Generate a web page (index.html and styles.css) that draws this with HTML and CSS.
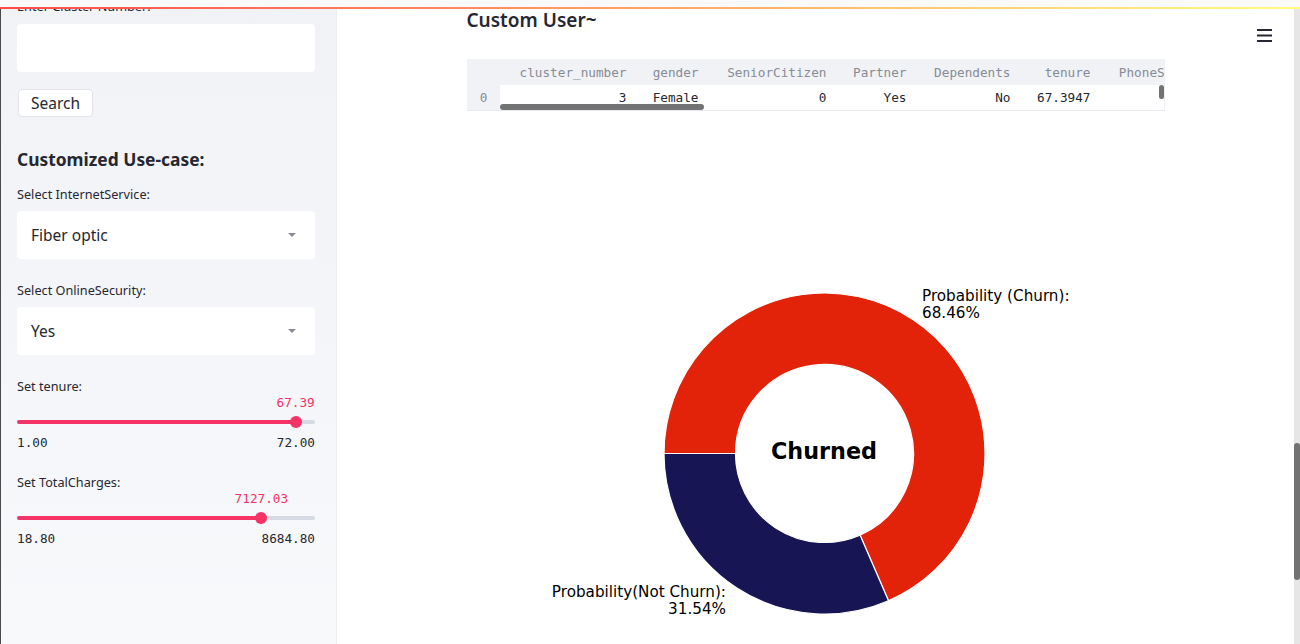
FILE: index.html
```html
<!DOCTYPE html>
<html lang="en">
<head>
<meta charset="utf-8">
<title>Churn</title>
<link rel="stylesheet" href="styles.css">
</head>
<body>
<div class="topbar"><div class="topbar-blank"></div><div class="deco"></div></div>
<div class="app">
  <aside class="sidebar">
    <div class="lbl lbl-cut">Enter Cluster Number:</div>
    <div class="textinput"></div>
    <button class="btn">Search</button>
    <h3 class="sb-title">Customized Use-case:</h3>

    <div class="field">
      <div class="lbl">Select InternetService:</div>
      <div class="select"><span>Fiber optic</span><i class="caret"></i></div>
    </div>
    <div class="field">
      <div class="lbl">Select OnlineSecurity:</div>
      <div class="select"><span>Yes</span><i class="caret"></i></div>
    </div>
    <div class="field">
      <div class="lbl">Set tenure:</div>
      <div class="slider">
        <div class="val-row"><span class="val" style="left:93.5%">67.39</span></div>
        <div class="track-row">
          <div class="track"><div class="fill" style="width:93.5%"></div></div>
          <div class="thumb" style="left:93.5%"></div>
        </div>
        <div class="minmax"><span>1.00</span><span>72.00</span></div>
      </div>
    </div>
    <div class="field">
      <div class="lbl">Set TotalCharges:</div>
      <div class="slider">
        <div class="val-row"><span class="val" style="left:82.0%">7127.03</span></div>
        <div class="track-row">
          <div class="track"><div class="fill" style="width:82.0%"></div></div>
          <div class="thumb" style="left:82.0%"></div>
        </div>
        <div class="minmax"><span>18.80</span><span>8684.80</span></div>
      </div>
    </div>
  </aside>

  <main class="main">
    <button class="menu" aria-label="menu">
      <svg width="15" height="14" viewBox="0 0 15 14"><rect x="0" y="0" width="15" height="2" fill="#262730"/><rect x="0" y="5.5" width="15" height="2" fill="#262730"/><rect x="0" y="11" width="15" height="2" fill="#262730"/></svg>
    </button>
    <div class="content">
      <h2 class="title">Custom User~</h2>
      <div class="df">
        <table>
          <colgroup>
            <col style="width:33px"><col style="width:141px"><col style="width:72px"><col style="width:128px"><col style="width:80px"><col style="width:104px"><col style="width:80px"><col style="width:120px"><col style="width:120px"><col style="width:120px">
          </colgroup>
          <thead>
            <tr><th class="idx"></th><th>cluster_number</th><th>gender</th><th>SeniorCitizen</th><th>Partner</th><th>Dependents</th><th>tenure</th><th>PhoneService</th><th>MultipleLines</th><th>InternetService</th></tr>
          </thead>
          <tbody>
            <tr><th class="idx">0</th><td>3</td><td>Female</td><td>0</td><td>Yes</td><td>No</td><td>67.3947</td><td>Yes</td><td>Yes</td><td>Fiber optic</td></tr>
          </tbody>
        </table>
        <div class="hthumb"></div>
        <div class="vthumb"></div>
      </div>
      <svg class="chart" width="698" height="520" viewBox="467 124 698 520">
        <path d="M 664 453.5 A 160.5 160.5 0 1 1 888.5 600.7 L 860 535.1 A 89 89 0 1 0 735.5 453.5 Z" fill="#e2230a" stroke="#ffffff" stroke-width="1.2"/>
        <path d="M 888.5 600.7 A 160.5 160.5 0 0 1 664 453.5 L 735.5 453.5 A 89 89 0 0 0 860 535.1 Z" fill="#171553" stroke="#ffffff" stroke-width="1.2"/>
        <text class="lab" x="922" y="301">Probability (Churn):</text>
        <text class="lab" x="922" y="318">68.46%</text>
        <text class="lab" x="726" y="597" text-anchor="end">Probability(Not Churn):</text>
        <text class="lab" x="726" y="614" text-anchor="end">31.54%</text>
        <text class="center" x="824" y="459" text-anchor="middle">Churned</text>
      </svg>
    </div>
  </main>

  <div class="vscroll"><div class="vscroll-thumb"></div></div>
</div>
</body>
</html>
```
FILE: styles.css
```css
* { box-sizing: border-box; margin: 0; padding: 0; }
html, body { width: 1300px; height: 644px; overflow: hidden; }
body {
  font-family: "Noto Sans", "Open Sans", sans-serif;
  color: #262730;
  background: #ffffff;
}

.topbar {
  position: fixed;
  top: 0; left: 0; right: 0;
  z-index: 10;
  display: flex;
  flex-direction: column;
}
.topbar-blank { height: 7px; background: #fafafa; }
.deco { height: 2px; background: linear-gradient(90deg, #ff4b4b, #fffd80); }

.app { display: flex; height: 644px; }

/* ---------- sidebar ---------- */
.sidebar {
  width: 337px;
  flex: none;
  background: linear-gradient(180deg, #f0f2f6 0%, #f8f9fb 100%);
  border-left: 1px solid #4a4a4a;
  border-right: 1px solid #eceef2;
  padding: 0 21px 0 16px;
  overflow: hidden;
  display: flex;
  flex-direction: column;
  align-items: stretch;
}
.lbl {
  font-size: 12.7px;
  line-height: 18px;
  height: 18px;
  color: #262730;
  white-space: nowrap;
}
.lbl-cut { margin-top: -3px; }
.textinput {
  margin-top: 9px;
  height: 48px;
  background: #ffffff;
  border-radius: 4px;
}
.btn {
  align-self: flex-start;
  margin-top: 17px;
  margin-left: 1px;
  height: 28px;
  padding: 0 12px;
  background: #ffffff;
  border: 1px solid #e2e4e9;
  border-radius: 4px;
  font-family: inherit;
  font-size: 15.5px;
  color: #262730;
  line-height: 26px;
}
.sb-title {
  margin-top: 30px;
  font-size: 17.4px;
  line-height: 24px;
  font-weight: 700;
  color: #262730;
  white-space: nowrap;
}
.field { margin-top: 22px; }
.sb-title + .field { margin-top: 14px; }
.select {
  margin-top: 8px;
  height: 48px;
  background: #ffffff;
  border-radius: 4px;
  display: flex;
  align-items: center;
  justify-content: space-between;
  padding: 0 19px 0 14px;
  font-size: 15.5px;
}
.caret {
  width: 0; height: 0;
  border-left: 4px solid transparent;
  border-right: 4px solid transparent;
  border-top: 4px solid #898c96;
}

.slider { display: flex; flex-direction: column; }
.val-row { position: relative; height: 16px; }
.val {
  position: absolute;
  top: 0;
  transform: translateX(-50%);
  font-family: "DejaVu Sans Mono", monospace;
  font-size: 12.7px;
  line-height: 16px;
  color: #f63366;
  white-space: nowrap;
}
.track-row {
  position: relative;
  height: 22px;
  display: flex;
  align-items: center;
}
.track {
  flex: 1;
  height: 4px;
  border-radius: 2px;
  background: #d5dae4;
  display: flex;
}
.fill { height: 4px; border-radius: 2px; background: #f63366; }
.thumb {
  position: absolute;
  top: 5px;
  width: 12px; height: 12px;
  margin-left: -6px;
  border-radius: 50%;
  background: #f63366;
}
.minmax {
  margin-top: 2px;
  display: flex;
  justify-content: space-between;
  font-family: "DejaVu Sans Mono", monospace;
  font-size: 12.7px;
  line-height: 16px;
  color: #262730;
}

/* ---------- main ---------- */
.main {
  position: relative;
  flex: 1;
  display: flex;
  justify-content: center;
  overflow: hidden;
  background: #ffffff;
}
.menu {
  position: absolute;
  top: 29px;
  right: 22px;
  border: 0;
  background: transparent;
  display: flex;
  width: 15px;
  height: 14px;
}
.content { width: 698px; flex: none; }
.title {
  margin-top: 7.5px;
  font-size: 19px;
  line-height: 24px;
  font-weight: 600;
  color: #262730;
}
.df {
  position: relative;
  margin-top: 27.5px;
  height: 52px;
  overflow: hidden;
  border-bottom: 1px solid #e6e9ef;
  border-right: 1px solid #eef0f3;
}
.df table {
  table-layout: fixed;
  border-collapse: collapse;
  width: 998px;
  font-family: "DejaVu Sans Mono", monospace;
  font-size: 12.7px;
}
.df th, .df td {
  text-align: right;
  padding: 0 14px 0 0;
  white-space: nowrap;
  font-weight: 400;
}
.df thead tr { height: 26px; background: #f0f2f6; }
.df thead th { color: #878b97; }
.df tbody tr { height: 25px; }
.df tbody td { color: #262730; background: #ffffff; }
.df th.idx { background: #f0f2f6; color: #878b97; padding-right: 12px; }
.hthumb {
  position: absolute;
  left: 33px;
  top: 45px;
  width: 204px;
  height: 6px;
  border-radius: 3px;
  background: #727272;
}
.vthumb {
  position: absolute;
  left: 692px;
  top: 26px;
  width: 5px;
  height: 14px;
  border-radius: 3px;
  background: #727272;
}
.chart { display: block; margin-top: 13px; overflow: visible; }
.chart .lab {
  font-family: "DejaVu Sans", sans-serif;
  font-size: 15.2px;
  fill: #000000;
}
.chart .center {
  font-family: "DejaVu Sans", sans-serif;
  font-size: 22.3px;
  font-weight: 700;
  fill: #000000;
}

/* fake page scrollbar column */
.vscroll {
  width: 6px;
  flex: none;
  background: #e6e6e6;
  padding-top: 443px;
}
.vscroll-thumb {
  height: 137px;
  border-radius: 3px;
  background: #727272;
}
```
